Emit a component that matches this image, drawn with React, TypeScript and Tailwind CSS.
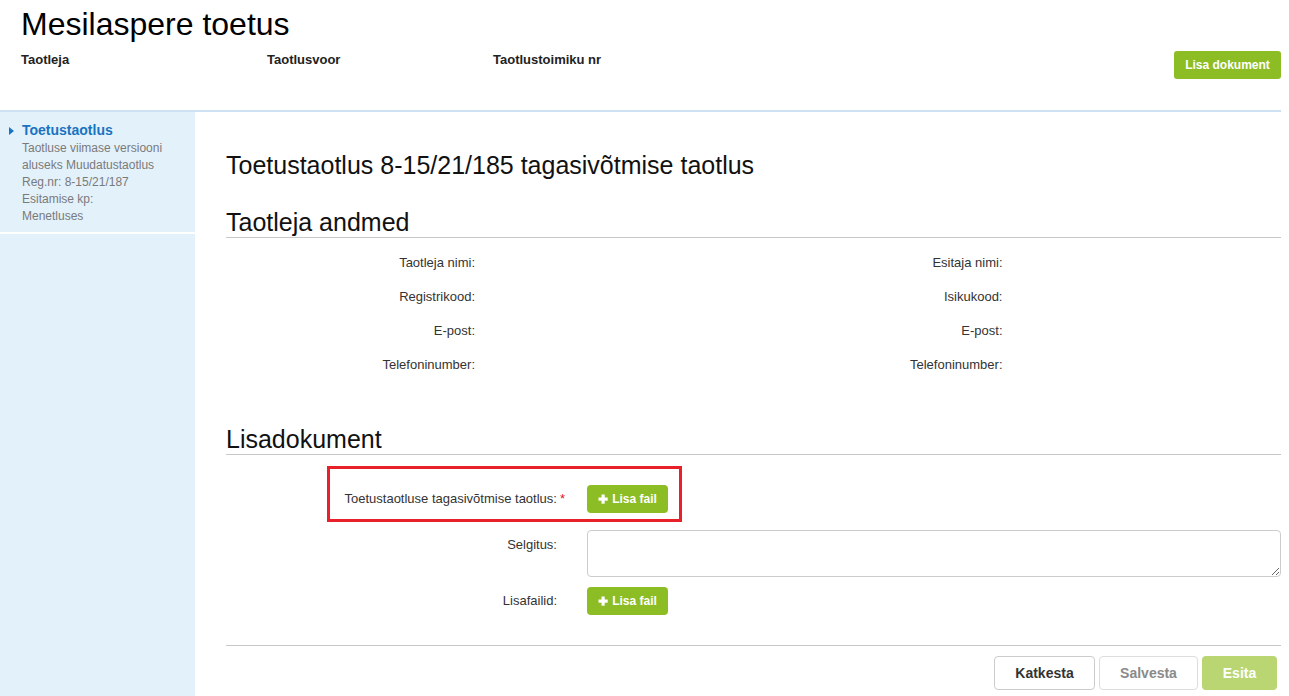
import React from "react";

function Plus() {
  return (
    <svg width="10" height="10" viewBox="0 0 10 10" className="shrink-0">
      <rect x="3.5" y="0.5" width="3.2" height="9.2" fill="#fff" />
      <rect x="0.5" y="3.5" width="9.2" height="3.2" fill="#fff" />
    </svg>
  );
}

function AddFile() {
  return (
    <button className="flex items-center justify-center gap-[4px] w-[81px] h-[28px] rounded-[4px] bg-[#8dbd24] text-white text-[12px] font-bold">
      <Plus />
      <span>Lisa fail</span>
    </button>
  );
}

function Field({ label }: { label: string }) {
  return (
    <div className="flex items-center h-[34px]">
      <div className="w-[249px] text-right text-[13px] text-[#333]">{label}</div>
    </div>
  );
}

export default function App() {
  return (
    <div className="w-[1289px] h-[696px] overflow-hidden bg-white font-['Liberation_Sans',Arial,sans-serif] text-[#333]">
      <header className="w-[1281px] h-[112px] border-b-2 border-[#cde1f2] pl-[21px] flex flex-col">
        <h1 className="pt-[6px] text-[32px] leading-[36px] text-black">Mesilaspere toetus</h1>
        <div className="mt-[9px] flex items-start">
          <div className="w-[246px] text-[13px] leading-[18px] font-bold text-[#222]">Taotleja</div>
          <div className="w-[226px] text-[13px] leading-[18px] font-bold text-[#222]">Taotlusvoor</div>
          <div className="text-[13px] leading-[18px] font-bold text-[#222]">Taotlustoimiku nr</div>
          <button className="ml-auto w-[107px] h-[28px] rounded-[3px] bg-[#8dbd24] text-white text-[12px] font-bold flex items-center justify-center">
            Lisa dokument
          </button>
        </div>
      </header>

      <div className="flex h-[584px]">
        <aside className="w-[195px] shrink-0 bg-[#e3f1fb]">
          <div className="border-b-2 border-white pt-[10px] pb-[7px] pl-[9px] flex">
            <div className="w-[13px] pt-[5px]">
              <svg width="5" height="8" viewBox="0 0 5 8">
                <polygon points="0,0 5,4 0,8" fill="#1a73c0" />
              </svg>
            </div>
            <div>
              <div className="text-[14px] leading-[17px] font-bold text-[#1a73c0]">Toetustaotlus</div>
              <div className="mt-[1px] text-[12px] leading-[17px] text-[#7a7a7a]">
                <div>Taotluse viimase versiooni</div>
                <div>aluseks Muudatustaotlus</div>
                <div>Reg.nr: 8-15/21/187</div>
                <div>Esitamise kp:</div>
                <div>Menetluses</div>
              </div>
            </div>
          </div>
        </aside>

        <main className="flex-1 pl-[31px] pr-[8px] pt-[38px]">
          <h2 className="text-[25px] leading-[30px] text-[#111]">Toetustaotlus 8-15/21/185 tagasivõtmise taotlus</h2>

          <h3 className="mt-[27px] text-[25px] leading-[30px] text-[#111] border-b border-[#c8c8c8]">Taotleja andmed</h3>
          <div className="mt-[8px] grid grid-cols-2">
            <div>
              <Field label="Taotleja nimi:" />
              <Field label="Registrikood:" />
              <Field label="E-post:" />
              <Field label="Telefoninumber:" />
            </div>
            <div>
              <Field label="Esitaja nimi:" />
              <Field label="Isikukood:" />
              <Field label="E-post:" />
              <Field label="Telefoninumber:" />
            </div>
          </div>

          <h3 className="mt-[42px] text-[25px] leading-[30px] text-[#111] border-b border-[#c8c8c8]">Lisadokument</h3>

          <div className="relative mt-[30px] flex items-center h-[28px]">
            <div className="w-[346px] pr-[15px] flex justify-end text-[13px] text-[#333]">
              <span>Toetustaotluse tagasivõtmise taotlus:</span>
              <span className="ml-[3px] mr-[-8px] text-[#e0161f]">*</span>
            </div>
            <div className="ml-[15px]">
              <AddFile />
            </div>
            <div className="absolute left-[101px] top-[-19px] w-[355px] h-[56px] border-[3px] border-[#e8202a] pointer-events-none" />
          </div>

          <div className="mt-[17px] flex items-start">
            <div className="w-[346px] pr-[15px] pt-[6px] text-right text-[13px] leading-[18px] text-[#333]">Selgitus:</div>
            <textarea className="ml-[15px] w-[694px] h-[47px] border border-[#cccccc] rounded-[4px] bg-white" />
          </div>

          <div className="mt-[10px] flex items-center h-[28px]">
            <div className="w-[346px] pr-[15px] text-right text-[13px] text-[#333]">Lisafailid:</div>
            <div className="ml-[15px]">
              <AddFile />
            </div>
          </div>

          <div className="mt-[30px] border-t border-[#c8c8c8] pt-[10px] pr-[4px] flex justify-end gap-[4px]">
            <button className="w-[101px] h-[34px] rounded-[4px] border border-[#cccccc] bg-white text-[14px] font-bold text-[#333]">Katkesta</button>
            <button className="w-[99px] h-[34px] rounded-[4px] border border-[#dddddd] bg-white text-[14px] font-bold text-[#8a8a8a]">Salvesta</button>
            <button className="w-[75px] h-[34px] rounded-[4px] bg-[#b9d672] text-[14px] font-bold text-white">Esita</button>
          </div>
        </main>
      </div>
    </div>
  );
}
